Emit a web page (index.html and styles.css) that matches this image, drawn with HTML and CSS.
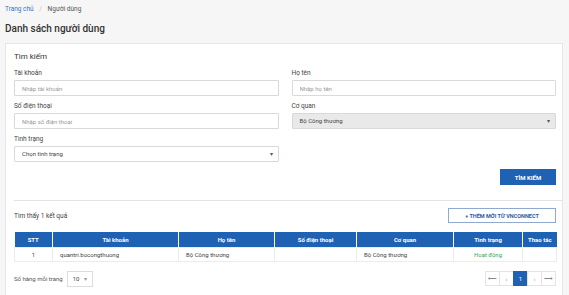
FILE: index.html
```html
<!DOCTYPE html>
<html lang="vi">
  <head>
    <meta charset="UTF-8" />
    <meta name="viewport" content="width=device-width, initial-scale=1.0" />
    <title>Danh sách người dùng</title>
    <link rel="stylesheet" href="styles.css">
  </head>
  <body>
    <div class="breadcrumb">
      <a href="#">Trang chủ</a>
      <span class="sep">/</span>
      <span>Người dùng</span>
    </div>
    <h1 class="page-title">Danh sách người dùng</h1>

    <div class="card">
      <div class="card-title">Tìm kiếm</div>

      <div class="search-form">
        <div class="field">
          <label>Tài khoản</label>
          <input class="input" type="text" placeholder="Nhập tài khoản" />
        </div>
        <div class="field">
          <label>Họ tên</label>
          <input class="input" type="text" placeholder="Nhập họ tên" />
        </div>
        <div class="field">
          <label>Số điện thoại</label>
          <input class="input" type="text" placeholder="Nhập số điện thoại" />
        </div>
        <div class="field">
          <label>Cơ quan</label>
          <div class="select disabled">Bộ Công thương<span class="caret">▾</span></div>
        </div>
        <div class="field">
          <label>Tình trạng</label>
          <div class="select">Chọn tình trạng<span class="caret">▾</span></div>
        </div>
      </div>

      <div class="actions">
        <button class="btn-primary">TÌM KIẾM</button>
      </div>

      <hr class="divider" />

      <div class="result-bar">
        <span>Tìm thấy 1 kết quả</span>
        <button class="btn-outline">+ THÊM MỚI TỪ VNCONNECT</button>
      </div>

      <table class="users">
        <thead>
          <tr>
            <th class="col-stt">STT</th>
            <th class="col-acc">Tài khoản</th>
            <th class="col-name">Họ tên</th>
            <th class="col-phone">Số điện thoại</th>
            <th class="col-org">Cơ quan</th>
            <th class="col-status">Tình trạng</th>
            <th class="col-act">Thao tác</th>
          </tr>
        </thead>
        <tbody>
          <tr>
            <td class="center">1</td>
            <td>quantri.bocongthuong</td>
            <td>Bộ Công thương</td>
            <td></td>
            <td>Bộ Công thương</td>
            <td class="center status-on">Hoạt động</td>
            <td></td>
          </tr>
        </tbody>
      </table>

      <div class="table-footer">
        <div class="page-size">
          <span>Số hàng mỗi trang</span>
          <div class="size-select">10 <span class="caret">▾</span></div>
        </div>
        <div class="pager">
          <button>⟵</button>
          <button>‹</button>
          <button class="active">1</button>
          <button>›</button>
          <button>⟶</button>
        </div>
      </div>
    </div>
  </body>
</html>
```

FILE: styles.css
```css
*,
*::before,
*::after {
  box-sizing: border-box;
}

body {
  margin: 0;
  background-color: #f6f6f6;
  font-family: Roboto, "Liberation Sans", sans-serif;
  color: #333;
  font-size: 6.5px;
}

/* Header */

.breadcrumb {
  padding: 4px 5px 0;
  height: 15px;
  line-height: 10px;
  color: #555;
  font-size: 6.5px;
}

.breadcrumb a {
  color: #3a72c0;
  text-decoration: none;
}

.breadcrumb .sep {
  color: #bbb;
  margin: 0 4px;
}

.page-title {
  margin: 0;
  padding: 8px 5px 0;
  height: 28px;
  line-height: 12px;
  font-size: 10px;
  font-weight: 500;
  color: #333;
}

/* Card */

.card {
  margin: 0 6px 0 5px;
  background-color: #fff;
  border: 1px solid #e6e6e6;
  padding: 8px 6px 20px 8px;
}

.card-title {
  height: 10px;
  line-height: 10px;
  font-size: 8px;
  color: #333;
  margin-bottom: 6px;
}

.search-form {
  display: grid;
  grid-template-columns: 1fr 1fr;
  column-gap: 13px;
  row-gap: 5px;
}

.field label {
  display: block;
  height: 10px;
  line-height: 10px;
  margin-bottom: 2px;
  color: #444;
  font-size: 6.5px;
}

.input,
.select {
  display: block;
  width: 100%;
  height: 16px;
  border: 1px solid #d9d9d9;
  border-radius: 1px;
  padding: 0 7px;
  font-family: inherit;
  font-size: 6px;
  color: #444;
  background-color: #fff;
  outline: none;
}

.input::placeholder {
  color: #9a9a9a;
}

.select {
  position: relative;
  line-height: 14px;
}

.select.disabled {
  background-color: #e9e9e9;
}

.caret {
  position: absolute;
  right: 5px;
  top: 0;
  font-size: 6px;
  color: #555;
}

.actions {
  display: flex;
  justify-content: flex-end;
  margin-top: 7px;
}

.btn-primary {
  width: 56px;
  height: 16px;
  border: none;
  background-color: #1f62b3;
  color: #fff;
  font-family: inherit;
  font-size: 6px;
  font-weight: 700;
  cursor: pointer;
}

.divider {
  margin: 15px -6px 0 0;
  border: none;
  border-top: 1px solid #e3e3e3;
}

.result-bar {
  display: flex;
  justify-content: space-between;
  align-items: center;
  margin-top: 7px;
  color: #444;
}

.btn-outline {
  width: 108px;
  height: 15px;
  border: 1px solid #8fa9cf;
  background-color: #fff;
  color: #2a5aa0;
  font-family: inherit;
  font-size: 5.5px;
  font-weight: 700;
  cursor: pointer;
}

/* Table */

.users {
  width: 100%;
  margin-top: 9px;
  border-collapse: collapse;
  table-layout: fixed;
}

.users th {
  height: 15px;
  background-color: #1f62b3;
  color: #fff;
  font-size: 6px;
  font-weight: 700;
  border-left: 1px solid #fff;
  padding: 0;
}

.users th:first-child {
  border-left: none;
}

.users td {
  height: 14px;
  padding: 0 7px;
  border: 1px solid #ececec;
  font-size: 6px;
  color: #444;
}

.users td.center {
  text-align: center;
}

.status-on {
  color: #3aa55a !important;
}

.col-stt { width: 38px; }
.col-acc { width: 126px; }
.col-name { width: 96px; }
.col-phone { width: 82px; }
.col-org { width: 97px; }
.col-status { width: 69px; }
.col-act { width: 34px; }

/* Footer */

.table-footer {
  display: flex;
  justify-content: space-between;
  align-items: center;
  margin-top: 9px;
}

.page-size {
  display: flex;
  align-items: center;
  gap: 4px;
  color: #555;
  font-size: 6px;
}

.size-select {
  position: relative;
  width: 26px;
  height: 16px;
  line-height: 14px;
  border: 1px solid #ddd;
  padding-left: 5px;
  color: #444;
}

.size-select .caret {
  right: 5px;
  color: #999;
}

.pager {
  display: flex;
}

.pager button {
  width: 15px;
  height: 15px;
  border: 1px solid #e4e4e4;
  margin-left: -1px;
  background-color: #fff;
  color: #888;
  font-family: inherit;
  font-size: 6px;
  padding: 0;
  cursor: pointer;
}

.pager button.active {
  background-color: #1f62b3;
  border-color: #1f62b3;
  color: #fff;
}
```
